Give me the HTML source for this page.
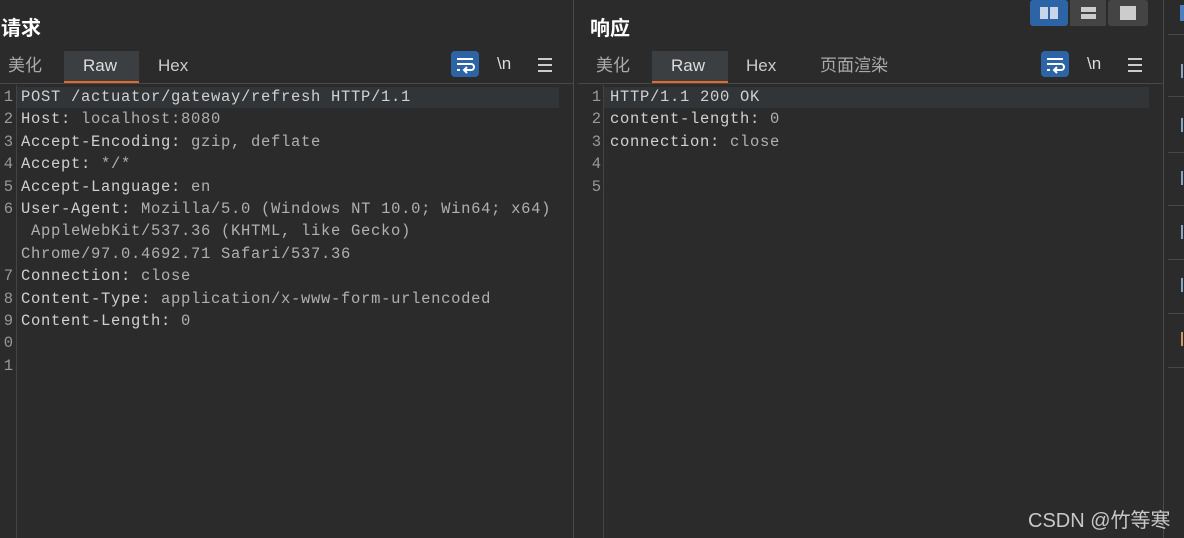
<!DOCTYPE html>
<html><head><meta charset="utf-8"><style>
*{margin:0;padding:0;box-sizing:border-box}
body{width:1184px;height:538px;background:#2b2b2b;position:relative;overflow:hidden;font-family:"Liberation Sans","Noto Sans CJK SC",sans-serif;color:#ddd}
.a{position:absolute;white-space:pre}
.h{font-size:20px;font-weight:bold;color:#fff;top:15px;line-height:28px}
.tab{font-size:17px;color:#aaa;top:51px;height:31px;line-height:30px}
.rawbg{position:absolute;top:51px;height:32px;background:#3c3f41;border-bottom:2px solid #e06c2c}
.hl{position:absolute;height:21px;background:#323538;top:87px}
.code{font-family:"Liberation Mono","Noto Sans CJK SC",monospace;font-size:15.5px;letter-spacing:0.7px;color:#d0d0d0;line-height:22.4px}
.ln{font-family:"Liberation Mono",monospace;font-size:15.5px;color:#999;line-height:22.4px;text-align:right}
.vl{position:absolute;width:1px;background:#444}
.hr{position:absolute;height:1px;background:#484848}
.wrap{position:absolute;width:28px;height:26px;background:#2d64a6;border-radius:4px;top:51px}
.nl{font-size:17px;color:#ddd;top:51px;line-height:26px}
.menu{position:absolute;width:14px;top:58px}
.menu i{display:block;height:2px;background:#ccc;margin-bottom:4px}
.k{color:#b0b0b0}
</style></head><body>
<div class="a h" style="left:1px">请求</div>
<div class="a h" style="left:590px">响应</div>

<div class="rawbg" style="left:64px;width:75px"></div>
<div class="a tab" style="left:8px">美化</div>
<div class="a tab" style="left:83px;color:#ddd">Raw</div>
<div class="a tab" style="left:158px;color:#ccc">Hex</div>

<div class="rawbg" style="left:652px;width:76px"></div>
<div class="a tab" style="left:596px">美化</div>
<div class="a tab" style="left:671px;color:#ddd">Raw</div>
<div class="a tab" style="left:746px;color:#ccc">Hex</div>
<div class="a tab" style="left:820px">页面渲染</div>

<div class="wrap" style="left:451px"><svg width="28" height="26"><g stroke="#fff" stroke-width="2" fill="none"><path d="M6 8h16M6 13h14a3 3 0 0 1 0 6h-6M16 16l-3 3 3 3M6 19h3"/></g></svg></div>
<div class="a nl" style="left:497px">\n</div>
<div class="menu" style="left:538px"><i></i><i></i><i></i></div>
<div class="wrap" style="left:1041px"><svg width="28" height="26"><g stroke="#fff" stroke-width="2" fill="none"><path d="M6 8h16M6 13h14a3 3 0 0 1 0 6h-6M16 16l-3 3 3 3M6 19h3"/></g></svg></div>
<div class="a nl" style="left:1087px">\n</div>
<div class="menu" style="left:1128px"><i></i><i></i><i></i></div>

<div class="hr" style="left:0;width:573px;top:83px"></div>
<div class="hr" style="left:578px;width:585px;top:83px"></div>

<div class="hl" style="left:17px;width:542px"></div>
<div class="hl" style="left:604px;width:545px"></div>

<div class="vl" style="left:16px;top:85px;height:453px"></div>
<div class="vl" style="left:603px;top:85px;height:453px"></div>
<div class="vl" style="left:573px;top:0;height:538px;background:#4a4a4a"></div>
<div class="vl" style="left:1163px;top:0;height:538px;background:#4a4a4a"></div>

<div class="a ln" style="left:0;width:13px;top:86px">1
2
3
4
5
6


7
8
9
0
1</div>
<div class="a code" style="left:21px;top:86px">POST /actuator/gateway/refresh HTTP/1.1
Host: <span class="k">localhost:8080</span>
Accept-Encoding: <span class="k">gzip, deflate</span>
Accept: <span class="k">*/*</span>
Accept-Language: <span class="k">en</span>
User-Agent: <span class="k">Mozilla/5.0 (Windows NT 10.0; Win64; x64)</span>
<span class="k"> AppleWebKit/537.36 (KHTML, like Gecko)</span>
<span class="k">Chrome/97.0.4692.71 Safari/537.36</span>
Connection: <span class="k">close</span>
Content-Type: <span class="k">application/x-www-form-urlencoded</span>
Content-Length: <span class="k">0</span></div>

<div class="a ln" style="left:588px;width:13px;top:86px">1
2
3
4
5</div>
<div class="a code" style="left:610px;top:86px">HTTP/1.1 200 OK
content-length: <span class="k">0</span>
connection: <span class="k">close</span></div>

<div style="position:absolute;left:1030px;top:0;width:38px;height:26px;background:#2d64a6;border-radius:3px"><div style="position:absolute;left:10px;top:7px;width:8px;height:12px;background:#c8d6e8"></div><div style="position:absolute;left:20px;top:7px;width:8px;height:12px;background:#c8d6e8"></div></div>
<div style="position:absolute;left:1070px;top:0;width:36px;height:26px;background:#444"><div style="position:absolute;left:11px;top:7px;width:15px;height:5px;background:#ccc"></div><div style="position:absolute;left:11px;top:14px;width:15px;height:5px;background:#ccc"></div></div>
<div style="position:absolute;left:1108px;top:0;width:40px;height:26px;background:#444;border-radius:3px"><div style="position:absolute;left:12px;top:6px;width:16px;height:14px;background:#ccc"></div></div>

<div class="hr" style="left:1168px;width:16px;top:34px"></div>
<div class="hr" style="left:1168px;width:16px;top:96px"></div>
<div class="hr" style="left:1168px;width:16px;top:152px"></div>
<div class="hr" style="left:1168px;width:16px;top:205px"></div>
<div class="hr" style="left:1168px;width:16px;top:259px"></div>
<div class="hr" style="left:1168px;width:16px;top:313px"></div>
<div class="hr" style="left:1168px;width:16px;top:367px"></div>
<div class="a" style="left:1180px;top:5px;width:4px;height:16px;background:#4a7fc0"></div>
<div class="a" style="left:1181px;top:64px;width:3px;height:14px;border-left:2px solid #8aa4c0"></div>
<div class="a" style="left:1181px;top:118px;width:3px;height:14px;border-left:2px solid #8aa4c0"></div>
<div class="a" style="left:1181px;top:171px;width:3px;height:14px;border-left:2px solid #8aa4c0"></div>
<div class="a" style="left:1181px;top:225px;width:3px;height:14px;border-left:2px solid #8aa4c0"></div>
<div class="a" style="left:1181px;top:278px;width:3px;height:14px;border-left:2px solid #8aa4c0"></div>
<div class="a" style="left:1181px;top:332px;width:3px;height:14px;border-left:2px solid #c96"></div>

<div class="a" style="left:1028px;top:504px;font-size:20px;color:#c8c8c8">CSDN @竹等寒</div>
</body></html>
